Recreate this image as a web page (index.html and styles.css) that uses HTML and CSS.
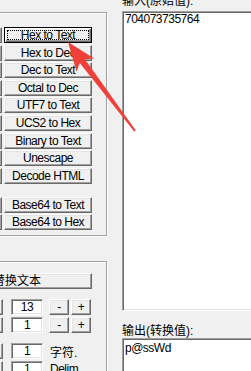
FILE: index.html
```html
<!DOCTYPE html>
<html lang="zh-CN">
<head>
    <meta charset="UTF-8">
    <meta name="viewport" content="width=device-width, initial-scale=1.0">
    <title>文本转换</title>
    <link rel="stylesheet" href="styles.css">
</head>
<body>
    <div class="window">
        <div class="left">
            <div class="group group-convert">
                <div class="btn-grid">
                    <button class="btn" aria-label="Text to Hex"></button>
                    <button class="btn btn-default">Hex to Text</button>
                    <button class="btn" aria-label="Dec to Hex"></button>
                    <button class="btn">Hex to Dec</button>
                    <button class="btn" aria-label="Text to Dec"></button>
                    <button class="btn">Dec to Text</button>
                    <button class="btn" aria-label="Dec to Octal"></button>
                    <button class="btn">Octal to Dec</button>
                    <button class="btn" aria-label="Text to UTF7"></button>
                    <button class="btn">UTF7 to Text</button>
                    <button class="btn" aria-label="Hex to UCS2"></button>
                    <button class="btn">UCS2 to Hex</button>
                    <button class="btn" aria-label="Text to Binary"></button>
                    <button class="btn">Binary to Text</button>
                    <button class="btn" aria-label="Escape"></button>
                    <button class="btn">Unescape</button>
                    <button class="btn" aria-label="Encode HTML"></button>
                    <button class="btn">Decode HTML</button>
                    <div class="spacer"></div>
                    <button class="btn" aria-label="Text to Base64"></button>
                    <button class="btn">Base64 to Text</button>
                    <button class="btn" aria-label="Hex to Base64"></button>
                    <button class="btn">Base64 to Hex</button>
                </div>
            </div>

            <div class="group group-replace">
                <button class="btn btn-wide cjk">替换文本</button>

                <div class="param-row row-first">
                    <button class="btn stub" aria-label="每行字符"></button>
                    <div class="edit">13</div>
                    <button class="btn btn-small btn-minus">-</button>
                    <button class="btn btn-small">+</button>
                </div>
                <div class="param-row">
                    <button class="btn stub" aria-label="起始位置"></button>
                    <div class="edit">1</div>
                    <button class="btn btn-small btn-minus">-</button>
                    <button class="btn btn-small">+</button>
                </div>
                <div class="param-row row-gap">
                    <button class="btn stub" aria-label="每隔"></button>
                    <div class="edit">1</div>
                    <span class="param-label cjk">字符.</span>
                </div>
                <div class="param-row">
                    <button class="btn stub" aria-label="插入"></button>
                    <div class="edit">1</div>
                    <span class="param-label">Delim.</span>
                </div>
            </div>
        </div>

        <div class="right">
            <div class="caption caption-in cjk">输入(原始值):</div>
            <div class="textbox textbox-in">704073735764</div>
            <div class="caption caption-out cjk">输出(转换值):</div>
            <div class="textbox textbox-out">p@ssWd</div>
        </div>
    </div>

    <!-- screenshot annotation -->
    <svg class="arrow" width="251" height="371" viewBox="0 0 251 371">
        <polygon points="68,42 94.2,58.6 85,59.3 135.8,130.4 134.2,131.6 79.8,63.1 76.6,71.8" fill="#f0403a"/>
    </svg>
</body>
</html>
```

FILE: styles.css
```css
body {
    margin: 0;
    width: 251px;
    height: 371px;
    overflow: hidden;
    position: relative;
    background-color: #f0f0f0;
    font-family: "Liberation Sans", "Noto Sans CJK SC", sans-serif;
    font-size: 12px;
    letter-spacing: -0.5px;
    color: #000;
}

.window {
    display: flex;
    align-items: flex-start;
}

.left {
    flex: none;
    width: 207px;
    margin-left: -100px;
}

.group {
    box-sizing: border-box;
    border: 1px solid #a0a0a0;
    box-shadow: inset 1px 1px 0 #fff, 1px 1px 0 #fff;
}

.group-convert {
    margin-top: 12px;
    height: 224px;
    padding: 14px 0 0 13px;
}

.btn-grid {
    display: grid;
    grid-template-columns: 88px 88px;
    grid-template-rows: repeat(9, 16px) 9.8px 16px 16px;
    column-gap: 2px;
    row-gap: 1.6px;
}

.spacer {
    grid-column: span 2;
}

.btn {
    box-sizing: border-box;
    position: relative;
    height: 16px;
    margin: 0;
    padding: 0;
    background-color: #f0f0f0;
    border: 1px solid;
    border-color: #fff #696969 #696969 #fff;
    box-shadow: inset -1px -1px 0 #a0a0a0, inset 1px 1px 0 #e3e3e3;
    font-family: inherit;
    font-size: inherit;
    letter-spacing: inherit;
    color: #000;
    line-height: 14px;
    text-align: center;
    white-space: nowrap;
    overflow: hidden;
}

.btn-default {
    border-color: #000;
    box-shadow: inset 1px 1px 0 #fff, inset -1px -1px 0 #696969, inset -2px -2px 0 #a0a0a0;
}

.btn-default::after {
    content: "";
    position: absolute;
    left: 2px;
    right: 2px;
    top: 2px;
    bottom: 2px;
    border: 1px dotted #000;
}

.group-replace {
    margin-top: 25px;
    height: 130px;
    padding: 11px 0 0 13px;
}

.btn-wide {
    display: block;
    width: 150px;
    margin-left: 28px;
}

.param-row {
    display: flex;
    align-items: center;
    height: 16px;
    margin-top: 2px;
}

.row-first,
.row-gap {
    margin-top: 10px;
}

.stub {
    flex: none;
    width: 89px;
}

.edit {
    box-sizing: border-box;
    flex: none;
    width: 32px;
    height: 16px;
    margin-left: 8px;
    background-color: #fff;
    border: 1px solid;
    border-color: #a0a0a0 #fff #fff #a0a0a0;
    box-shadow: inset 1px 1px 0 #696969, inset -1px -1px 0 #e3e3e3;
    line-height: 14px;
    text-align: center;
}

.btn-small {
    flex: none;
    width: 20px;
    margin-left: 2px;
}

.btn-minus {
    margin-left: 6px;
}

.param-label {
    margin-left: 7px;
    white-space: nowrap;
}

.right {
    flex: none;
    width: 200px;
    margin-left: 15px;
}

.caption {
    height: 14px;
    line-height: 14px;
    white-space: nowrap;
}

.caption-in {
    margin-top: -6px;
    margin-bottom: 3px;
}

.caption-out {
    margin-top: 13px;
}

.textbox {
    box-sizing: border-box;
    background-color: #fff;
    border: 1px solid;
    border-color: #a0a0a0 #fff #fff #a0a0a0;
    box-shadow: inset 1px 1px 0 #696969, inset -1px -1px 0 #e3e3e3;
    padding: 0 2px;
    line-height: 14px;
}

.textbox-in {
    height: 300px;
}

.textbox-out {
    height: 100px;
    padding-top: 2px;
}

.arrow {
    position: absolute;
    left: 0;
    top: 0;
    pointer-events: none;
}

/* chinese text keeps its normal spacing */
.cjk {
    letter-spacing: 0;
}
```
